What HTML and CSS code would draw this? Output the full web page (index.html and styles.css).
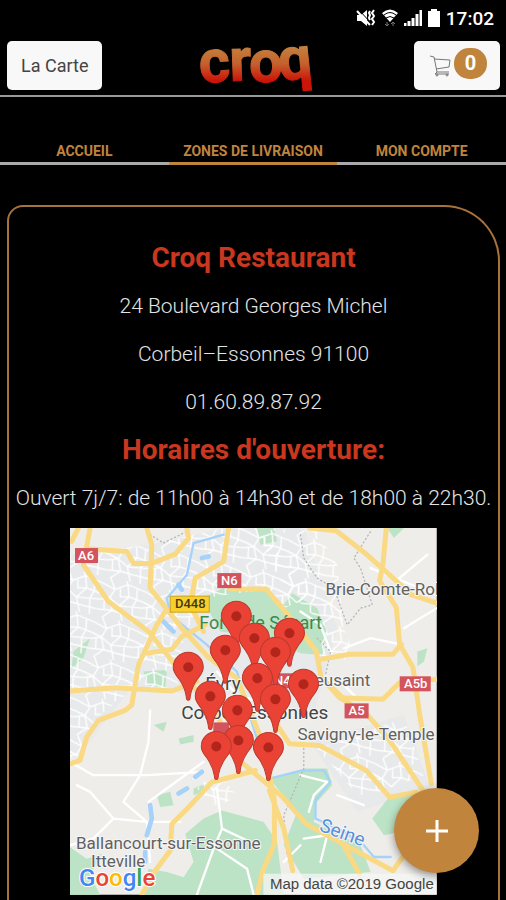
FILE: index.html
```
<!DOCTYPE html>
<html lang="fr">
<head>
  <meta charset="UTF-8">
  <meta name="viewport" content="width=device-width, initial-scale=1.0">
  <title>Croq Restaurant</title>
  <link rel="stylesheet" href="styles.css">
</head>
<body>
  <div class="status-bar">
    <svg class="status-icon" width="20" height="18" viewBox="0 0 20 18">
      <path d="M1 6h4l6-5v16l-6-5H1z" fill="#fff"/>
      <path d="M3 1l12 13" stroke="#000"/>
      <path d="M1 2l13 14M14 2l-1 2 1 2-1 3 1 2M18 1l-2 3 2 3-2 3 2 3-2 3" fill="none" stroke="#fff" stroke-width="2"/>
    </svg>
    <svg class="status-icon" width="16" height="18" viewBox="0 0 16 18">
      <path d="M0 4q8-7 16 0l-8 9z" fill="#fff"/>
      <path d="M2 6q6-5 12 0M4 9q4-3 8 0" fill="none" stroke="#000"/>
      <path d="M5 13v4M3 15l2 2 2-2M11 17v-4M9 15l2-2 2 2" fill="none" stroke="#777"/>
    </svg>
    <svg class="status-icon" width="18" height="18" viewBox="0 0 18 18">
      <path d="M1 17v-3M5 17v-5M9 17V9M13 17V5M17 17V1" stroke="#fff" stroke-width="3"/>
    </svg>
    <svg class="status-icon" width="12" height="18" viewBox="0 0 12 18">
      <path d="M3 0h6v2h3v16H0V2h3z" fill="#fff"/>
    </svg>
    <span class="clock">17:02</span>
  </div>

  <header class="header">
    <button class="header-btn" type="button">La Carte</button>
    <svg class="logo" width="116" height="54" viewBox="0 0 116 54" role="img" aria-label="croq">
      <defs>
        <linearGradient id="flame" gradientUnits="userSpaceOnUse" x1="0" y1="6" x2="0" y2="48">
          <stop offset="0" stop-color="#c48440"/>
          <stop offset="0.45" stop-color="#c4602c"/>
          <stop offset="0.85" stop-color="#cc1408"/>
        </linearGradient>
      </defs>
      <text class="logo-text" fill="url(#flame)" stroke="url(#flame)"><tspan x="0" y="44" rotate="-4">c</tspan><tspan x="30" y="42" rotate="-2">r</tspan><tspan x="49" y="43" rotate="0">o</tspan><tspan x="80" y="42" rotate="-6">q</tspan></text>
    </svg>
    <button class="header-btn cart-btn" type="button" aria-label="Panier">
      <svg width="23" height="24" viewBox="0 0 23 24" fill="none" stroke="#777">
        <path d="M1 2l4 1 3 15h12M5 5l16 1-1 7-13 2M8 18l-2 2h14"/>
        <circle cx="8" cy="21" r="1"/>
        <circle cx="18" cy="21" r="1"/>
      </svg>
      <span class="badge">0</span>
    </button>
  </header>

  <nav class="tabs">
    <a class="tab" href="#accueil">ACCUEIL</a>
    <a class="tab active" href="#zones">ZONES DE LIVRAISON</a>
    <a class="tab" href="#compte">MON COMPTE</a>
  </nav>

  <main class="card">
    <h1 class="title">Croq Restaurant</h1>
    <p class="line">24 Boulevard Georges Michel</p>
    <p class="line">Corbeil–Essonnes 91100</p>
    <p class="line">01.60.89.87.92</p>
    <h2 class="title">Horaires d'ouverture:</h2>
    <p class="line">Ouvert 7j/7: de 11h00 à 14h30 et de 18h00 à 22h30.</p>

    <svg class="map" viewBox="0 0 366 366">
      <defs>
        <pattern id="streets" width="130" height="120" patternUnits="userSpaceOnUse" patternTransform="rotate(12)">
          <path d="M0 20L40 32L75 10L130 20M0 70L30 60L62 78L130 70M20 0L40 32L30 60L45 95L20 120M75 10L70 0M75 10L86 45L62 78L80 120M86 45L130 52M0 52L30 60M45 95L0 100M45 95L80 98L130 100M105 15L110 50L102 72L110 120M55 22L60 50L86 45M15 66L20 98" fill="none" stroke="#fff" stroke-width="4"/>
        </pattern>
        <g id="pin">
          <path d="M0 33C-2 33-2 31-2 29C-3 22-5 18-9 12C-12 8-15 5-15 0A15 15 0 0 1 15 0C15 5 12 8 9 12C5 18 3 22 2 29C2 31 2 33 0 33z" fill="#ea4335" stroke="#b93a2e"/>
          <circle r="5" fill="#b1251b"/>
        </g>
      </defs>
      <rect width="366" height="366" fill="#efedea"/>

      <g transform="scale(0.3333)" stroke-linejoin="round" stroke-linecap="round">
        <!-- built-up areas -->
        <path d="M0 80L240 50L460 0L700 0L800 300L730 560L500 500L0 480z" fill="#e8e9ea"/>
        <path d="M0 490L185 480L120 560L30 680L0 690zM720 640L1000 560L1080 780L860 850z" fill="#e8e9ea"/>

        <!-- forests and parks -->
        <g fill="#bce3c5">
          <path d="M395 210L460 180L590 183L640 230L665 195L740 240L772 320L755 380L690 375L600 330L450 310z"/>
          <path d="M345 916L400 870L455 846L580 880L620 940L640 1098L220 1098L235 1020L290 1030L340 1046L370 1000z"/>
          <path d="M597 750L700 720L770 720L785 770L740 820L730 880L870 950L900 1030L700 1050L640 950L680 850z"/>
          <path d="M0 956L50 990L95 975L60 1040L90 1098L0 1098z"/>
          <path d="M220 430L290 425L285 480L230 470zM10 370L60 330L40 390L5 420zM560 0L610 0L620 40L570 50zM950 0L1000 0L970 30z"/>
          <path d="M905 870L960 800L1040 790L1040 900L940 920zM1040 370L1070 360L1060 400L1040 415zM250 590L290 580L280 610zM325 630L370 620L370 640L330 648zM260 800L300 790L310 830L270 835zM530 880L560 890L555 920zM370 780L430 755L420 780L370 800z"/>
        </g>

        <!-- minor streets -->
        <path d="M0 80L240 50L460 0L560 0L740 200L640 240L590 183L395 210L340 330L320 480L0 480z" fill="url(#streets)"/>
        <path d="M560 0L740 10L800 110L820 300L860 400L740 380L770 300L640 180zM740 660L1000 570L1060 740L870 810zM0 490L180 490L90 560L30 680L0 690zM380 780L440 730L500 800L440 840z" fill="url(#streets)"/>
        <g fill="none" stroke="#fff" stroke-width="7">
          <path d="M0 700L70 740L230 740L400 730L370 750M240 546L235 640L210 740L160 820L230 880L330 880M20 770L60 790L130 870L70 930L0 950M130 870L230 880L240 1000M235 820L290 780L400 700M440 780L455 900L430 960L380 1098M455 900L560 950M440 960L530 1020L550 1098"/>
          <path d="M900 120L1098 200M977 158L1070 80M987 348L900 330L820 360M1000 300L1098 240M700 930L770 920L820 946M640 1000L690 950M770 920L750 1000M690 740L770 760L730 800L715 850M800 800L880 830M690 250L750 290L780 370M440 430L500 500L640 540M740 450L820 470L860 510"/>
        </g>

        <!-- rivers and ponds -->
        <g fill="none" stroke="#a6d2fa" stroke-width="7">
          <path d="M460 20L370 45L350 140L290 210L300 260L410 350L500 430L550 600L600 750L690 727L760 725L780 760L735 815L735 870L820 910L880 950L910 985L960 985"/>
          <path d="M395 90L415 85M325 170L335 185M240 830L245 870L230 920M325 795L350 780M375 745L395 730M225 970L225 1000M280 280L310 310" stroke-width="14"/>
        </g>

        <!-- communal limits -->
        <path d="M240 20L280 45L350 10M690 20L700 90L740 150L790 180L830 290L870 240L905 230L870 120L850 90L900 10M700 660L700 720L640 860L650 980M740 330L780 370L765 440" fill="none" stroke="#b6b6ba" stroke-width="4" stroke-dasharray="3 9"/>

        <!-- main roads -->
        <g fill="none" stroke="#f9d983" stroke-width="15">
          <path d="M60 0L40 110L115 220L235 310L315 410L440 560L500 690L637 806L707 886L817 946L967 1026L1000 980M25 0L5 40"/>
          <path d="M60 63L170 70L190 106L245 106L315 78L355 30L350 0M230 0L245 50L240 180L335 300L415 388L500 450L580 650L612 816V946L577 1026L560 1098"/>
          <path d="M475 0L460 100L375 150L360 230L400 310M285 250L260 290L205 410L185 530L165 546L85 576L50 626L30 696L0 706M0 488L135 478L305 488L380 460M230 375L305 363L335 325L405 290"/>
          <path d="M480 183H587L647 253L737 368L752 448L807 508L937 513L987 463L1098 453M717 0L797 8L887 78L977 158L1017 198L1098 225M947 0L937 108L927 158L977 238L987 348L1027 418L1047 558L1082 766"/>
          <path d="M752 393L837 378H967L992 348M807 508L887 556L957 636L1057 786M600 560L657 646L747 651L887 726L957 806L1037 791M597 786L640 900L667 1026M817 946L867 1036M752 448L840 530M555 726L425 761L355 836L305 886L300 966L255 1026L215 1098"/>
        </g>
      </g>

      <g class="places">
        <text x="255" y="67">Brie-Comte-Rob</text>
        <text x="129" y="101" class="forest">Forêt de Sénart</text>
        <text x="135" y="162" class="city">Évry</text>
        <text x="231" y="158">Lieusaint</text>
        <text x="111" y="191" class="city">Corbeil-Essonnes</text>
        <text x="227" y="212">Savigny-le-Temple</text>
        <text x="6" y="320">Ballancourt-sur-Essonne</text>
        <text x="21" y="338">Itteville</text>
        <text x="248" y="302" class="river" transform="rotate(20 248 302)">Seine</text>
      </g>

      <g class="shields">
        <rect x="5" y="20" width="23" height="15"/><text x="16" y="32">A6</text>
        <rect x="147" y="45" width="24" height="15"/><text x="159" y="57">N6</text>
        <rect x="100" y="68" width="39" height="16" class="yellow"/><text x="120" y="80" class="dark">D448</text>
        <rect x="200" y="145" width="24" height="15"/><text x="212" y="157">N4</text>
        <rect x="329" y="148" width="31" height="15"/><text x="345" y="160">A5b</text>
        <rect x="274" y="175" width="24" height="15"/><text x="286" y="187">A5</text>
        <rect x="143" y="194" width="16" height="13"/>
      </g>

      <use href="#pin" x="166" y="88"/>
      <use href="#pin" x="219" y="105"/>
      <use href="#pin" x="184" y="110"/>
      <use href="#pin" x="155" y="122"/>
      <use href="#pin" x="205" y="124"/>
      <use href="#pin" x="118" y="139"/>
      <use href="#pin" x="187" y="150"/>
      <use href="#pin" x="233" y="156"/>
      <use href="#pin" x="140" y="168"/>
      <use href="#pin" x="205" y="171"/>
      <use href="#pin" x="167" y="182"/>
      <use href="#pin" x="168" y="212"/>
      <use href="#pin" x="146" y="218"/>
      <use href="#pin" x="198" y="219"/>

      <rect x="193" y="345" width="173" height="21" fill="#f5f5f5" fill-opacity="0.75"/>
      <text x="363" y="360" class="copyright">Map data ©2019 Google</text>
      <text x="9" y="357" class="google"><tspan fill="#4285f4">G</tspan><tspan fill="#ea4335">o</tspan><tspan fill="#fbbc05">o</tspan><tspan fill="#4285f4">g</tspan><tspan fill="#34a853">l</tspan><tspan fill="#ea4335">e</tspan></text>
    </svg>
  </main>

  <button class="fab" type="button" aria-label="Ajouter">
    <svg width="22" height="22" viewBox="0 0 22 22">
      <path d="M11 0v22M0 11h22" stroke="#fff" stroke-width="3"/>
    </svg>
  </button>
</body>
</html>
```
FILE: styles.css
```
* {
  box-sizing: border-box;
}
body {
  margin: 0;
  min-height: 100vh;
  display: flex;
  flex-direction: column;
  background-color: #000;
  color: #e4e4e4;
  font-family: Roboto, "Liberation Sans", sans-serif;
}
button {
  border: none;
  font-family: inherit;
  cursor: pointer;
}
.status-bar {
  height: 36px;
  padding-right: 12px;
  display: flex;
  justify-content: flex-end;
  align-items: center;
  gap: 6px;
}
.clock {
  color: #fff;
  font-size: 19px;
  font-weight: 500;
}
.header {
  height: 61px;
  padding: 0 6px 0 7px;
  display: flex;
  justify-content: space-between;
  align-items: center;
  border-bottom: 2px solid #999;
}
.header-btn {
  height: 49px;
  padding: 0 14px;
  border-radius: 5px;
  background-color: #f8f8f8;
  color: #444;
  font-size: 18px;
}
.cart-btn {
  display: flex;
  align-items: center;
  gap: 2px;
  padding: 0 13px 0 15px;
}
.badge {
  width: 33px;
  height: 31px;
  margin-bottom: 4px;
  border-radius: 15px;
  background-color: #c0843d;
  color: #fff;
  font-size: 20px;
  font-weight: bold;
  line-height: 31px;
}
.logo {
  overflow: visible;
}
.logo-text {
  font-size: 60px;
  font-weight: bold;
  stroke-width: 1px;
}
.tabs {
  margin-top: 41px;
  display: grid;
  grid-template-columns: repeat(3, 1fr);
}
.tab {
  height: 27px;
  border-bottom: 3px solid #aaa;
  color: #c0843d;
  font-size: 14px;
  font-weight: bold;
  line-height: 26px;
  text-align: center;
  text-decoration: none;
}
.tab.active {
  border-color: #c0843d;
}
.card {
  flex: 1;
  margin: 40px 6px 0 7px;
  padding-top: 27px;
  border: 2px solid #a8733a;
  border-bottom: none;
  border-radius: 16px 56px 0 0;
  text-align: center;
}
.title {
  margin: 0;
  color: #c9371e;
  font-size: 28px;
  font-weight: bold;
  line-height: 48px;
}
.line {
  margin: 0;
  font-size: 21px;
  font-weight: 300;
  line-height: 48px;
  white-space: nowrap;
}
.map {
  display: block;
  width: 75%;
  margin: 6px auto 0;
}
.places {
  fill: #616161;
  stroke: #f5f5f5;
  stroke-width: 2px;
  paint-order: stroke;
  font-size: 17px;
}
.places .city {
  fill: #444;
  font-size: 19px;
}
.places .forest {
  fill: #3a8a50;
  stroke: none;
  font-size: 18px;
}
.places .river {
  fill: #5a90d8;
  font-size: 19px;
}
.shields {
  fill: #d4545e;
  font-size: 13px;
  font-weight: 500;
  text-anchor: middle;
}
.shields text {
  fill: #fff;
}
.shields .yellow {
  fill: #f9cf2c;
  stroke: #c9a21c;
}
.shields .dark {
  fill: #443a10;
}
.copyright {
  fill: #444;
  font-family: "Liberation Sans", Arial, sans-serif;
  font-size: 15px;
  text-anchor: end;
}
.google {
  font-size: 24px;
  font-weight: 500;
  stroke: #fff;
  stroke-width: 2px;
  paint-order: stroke;
}
.fab {
  position: fixed;
  right: 27px;
  bottom: 27px;
  width: 85px;
  height: 85px;
  display: flex;
  justify-content: center;
  align-items: center;
  border-radius: 50%;
  background-color: #c0843d;
  box-shadow: 0 3px 8px rgba(0, 0, 0, 0.4);
}
```
